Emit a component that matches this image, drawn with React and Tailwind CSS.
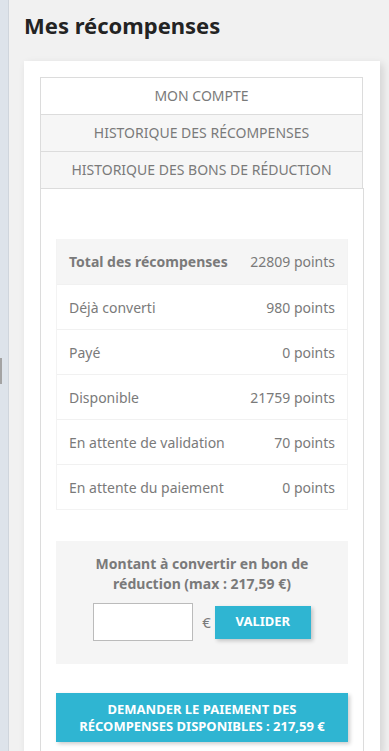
import React from "react";

const rows = [
  { label: "Total des récompenses", value: "22809 points", head: true },
  { label: "Déjà converti", value: "980 points" },
  { label: "Payé", value: "0 points" },
  { label: "Disponible", value: "21759 points" },
  { label: "En attente de validation", value: "70 points" },
  { label: "En attente du paiement", value: "0 points" },
];

const tabs = ["MON COMPTE", "HISTORIQUE DES RÉCOMPENSES", "HISTORIQUE DES BONS DE RÉDUCTION"];

export default function App() {
  return (
    <div
      className="flex min-h-screen bg-[#f1f1f1] text-[#7a7a7a]"
      style={{ fontFamily: '"Noto Sans", "Open Sans", sans-serif' }}
    >
      {/* left rail */}
      <div className="w-[9px] shrink-0 bg-[#dde3ea] border-r border-[#cfd5dc]">
        <div className="mt-[358px] h-[26px] w-[2px] bg-[#a3a3a3]" />
      </div>

      <main className="flex-1 pl-[15px] pr-[9px]">
        <h1 className="pt-[9px] pb-[19px] text-[22px] font-bold leading-[33px] text-[#232323]">
          Mes récompenses
        </h1>

        <div className="bg-white p-4 pb-0 shadow-[3px_3px_8px_0_rgba(0,0,0,0.13)]">
          <div className="mr-[1px]">
            {tabs.map((t, i) => (
              <div
                key={t}
                className={
                  "h-[38px] border border-[#dcdcdc] text-center text-[14px] leading-[36px] " +
                  (i === 0 ? "bg-white" : "bg-[#f6f6f6] -mt-px")
                }
              >
                {t}
              </div>
            ))}
          </div>

          <div className="-mt-px border border-[#dcdcdc] border-b-0 px-[15px] pt-[50px] pb-[10px]">
            <div className="border-x border-b border-[#f3f3f3]">
              {rows.map((r) => (
                <div
                  key={r.label}
                  className={
                    "flex h-[45px] items-center justify-between px-[12px] text-[14px] " +
                    (r.head ? "bg-[#f5f5f5]" : "border-t border-[#f1f1f1]")
                  }
                >
                  <span className={r.head ? "font-bold" : ""}>{r.label}</span>
                  <span>{r.value}</span>
                </div>
              ))}
            </div>

            <div className="mt-[31px] bg-[#f5f5f5] px-4 pt-[13px] pb-[23px] text-center">
              <p className="text-[14px] font-bold leading-[20px]">
                Montant à convertir en bon de
                <br />
                réduction (max : 217,59 €)
              </p>
              <div className="mt-[9px] flex items-center justify-center">
                <input
                  type="text"
                  className="h-[38px] w-[100px] border border-[#bbbbbb] bg-white outline-none"
                />
                <span className="ml-[9px] mr-[4px] text-[15px]">€</span>
                <button className="h-[33px] w-[96px] bg-[#2fb5d2] text-[13px] font-bold text-white shadow-[2px_2px_4px_0_rgba(0,0,0,0.2)]">
                  VALIDER
                </button>
              </div>
            </div>

            <button className="mt-[29px] block h-[49px] w-full bg-[#2fb5d2] px-2 text-center text-[13px] font-bold leading-[17px] text-white shadow-[2px_2px_4px_0_rgba(0,0,0,0.2)]">
              DEMANDER LE PAIEMENT DES
              <br />
              RÉCOMPENSES DISPONIBLES : 217,59 €
            </button>
          </div>
        </div>
      </main>
    </div>
  );
}
